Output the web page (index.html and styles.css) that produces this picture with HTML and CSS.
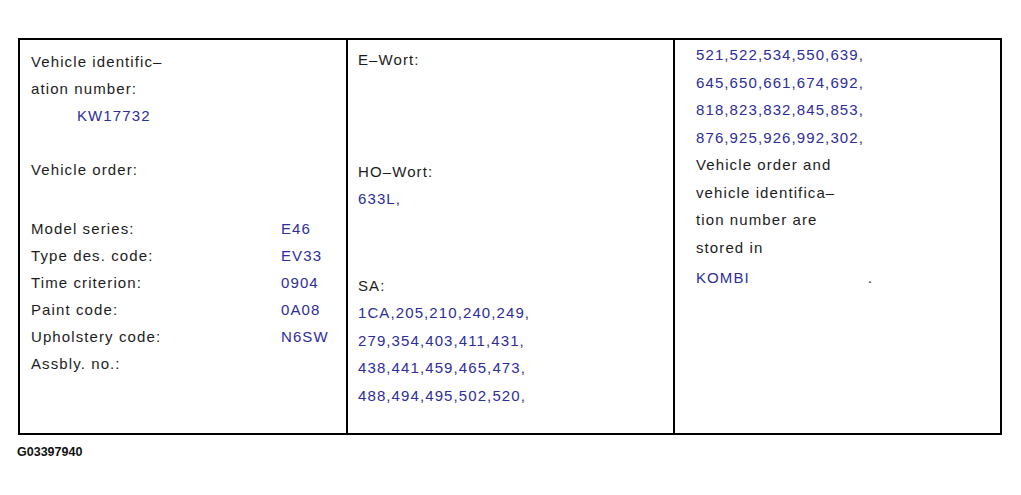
FILE: index.html
```html
<!DOCTYPE html>
<html>
<head>
<meta charset="utf-8">
<link rel="stylesheet" href="styles.css">
</head>
<body>
<div class="sheet">
  <div class="table">
    <div class="col col-left">
      <div class="line">Vehicle identific–</div>
      <div class="line">ation number:</div>
      <div class="line val indent">KW17732</div>
      <div class="line gap1">Vehicle order:</div>
      <div class="pairs">
        <div class="line">Model series:</div><div class="line val">E46</div>
        <div class="line">Type des. code:</div><div class="line val">EV33</div>
        <div class="line">Time criterion:</div><div class="line val">0904</div>
        <div class="line">Paint code:</div><div class="line val">0A08</div>
        <div class="line">Upholstery code:</div><div class="line val">N6SW</div>
        <div class="line">Assbly. no.:</div><div class="line val"></div>
      </div>
    </div>
    <div class="col col-mid">
      <div class="line">E–Wort:</div>
      <div class="line gap-ho">HO–Wort:</div>
      <div class="line val">633L,</div>
      <div class="line gap-sa">SA:</div>
      <div class="line val">1CA,205,210,240,249,</div>
      <div class="line val">279,354,403,411,431,</div>
      <div class="line val">438,441,459,465,473,</div>
      <div class="line val">488,494,495,502,520,</div>
    </div>
    <div class="col col-right">
      <div class="line val">521,522,534,550,639,</div>
      <div class="line val">645,650,661,674,692,</div>
      <div class="line val">818,823,832,845,853,</div>
      <div class="line val">876,925,926,992,302,</div>
      <div class="line">Vehicle order and</div>
      <div class="line">vehicle identifica–</div>
      <div class="line">tion number are</div>
      <div class="line">stored in</div>
      <div class="line kombi"><span class="val">KOMBI</span><span class="dot">.</span></div>
    </div>
  </div>
  <div class="caption">G03397940</div>
</div>
</body>
</html>
```

FILE: styles.css
```css
* { box-sizing: border-box; }
html, body { margin: 0; padding: 0; background: #ffffff; }
body {
  width: 1021px;
  height: 495px;
  font-family: "Liberation Sans", Arial, sans-serif;
  color: #1c1c1c;
}
.sheet {
  padding: 38px 19px 0 18px;
}
.table {
  display: grid;
  grid-template-columns: 328px 327px 325px;
  height: 397px;
  border: 2px solid #000;
}
.col {
  display: flex;
  flex-direction: column;
  font-size: 15px;
  letter-spacing: 1.1px;
}
.col-left {
  border-right: 2px solid #000;
  padding: 8px 0 0 11px;
}
.col-mid {
  border-right: 2px solid #000;
  padding: 6px 0 0 10px;
}
.col-right {
  padding: 1px 0 0 21px;
}
.line {
  line-height: 27.5px;
  height: 27.5px;
  white-space: nowrap;
}
.col-left .line { line-height: 27px; height: 27px; }
.val { color: #2d2d9c; }
.indent { padding-left: 46px; }
.gap1 { margin-top: 27px; }
.pairs {
  margin-top: 32px;
  display: grid;
  grid-template-columns: 250px auto;
}
.gap-ho { margin-top: 84px; }
.gap-sa { margin-top: 59px; }
.kombi { display: flex; margin-top: 3px; }
.dot { margin-left: 118px; color: #333; }
.caption {
  margin-top: 10px;
  margin-left: -1px;
  font-size: 12.5px;
  font-weight: bold;
  color: #111;
}
```
